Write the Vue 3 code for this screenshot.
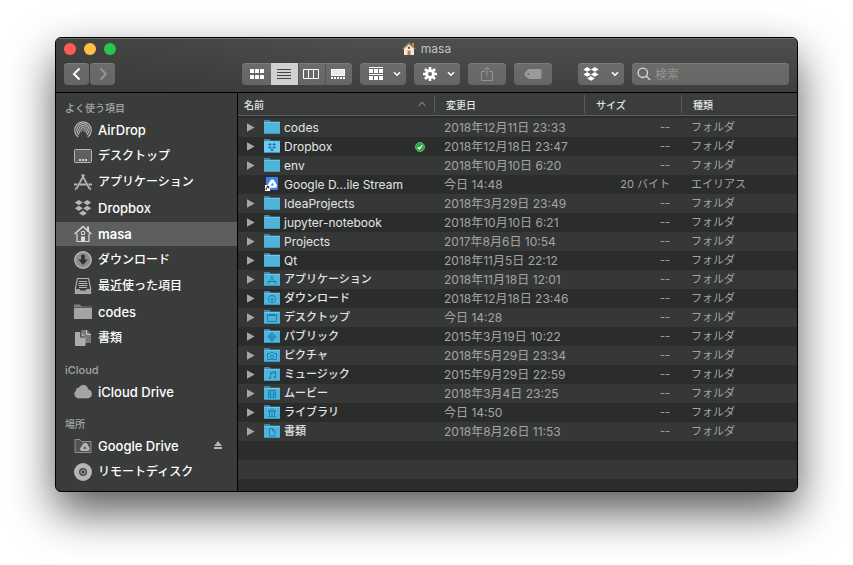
<script setup>
import { ref } from 'vue'

const selected = ref('masa')
const view = ref('list')
const query = ref('')

const groups = [
  {
    title: 'よく使う項目',
    items: [
      { name: 'AirDrop', icon: 'airdrop' },
      { name: 'デスクトップ', icon: 'desktop', ja: true },
      { name: 'アプリケーション', icon: 'apps', ja: true },
      { name: 'Dropbox', icon: 'dropbox' },
      { name: 'masa', icon: 'home' },
      { name: 'ダウンロード', icon: 'download', ja: true },
      { name: '最近使った項目', icon: 'recent', ja: true },
      { name: 'codes', icon: 'folder' },
      { name: '書類', icon: 'docs', ja: true },
    ],
  },
  { title: 'iCloud', latin: true, items: [{ name: 'iCloud Drive', icon: 'cloud' }] },
  {
    title: '場所',
    items: [
      { name: 'Google Drive', icon: 'gdrive', eject: true },
      { name: 'リモートディスク', icon: 'disc', ja: true },
    ],
  },
]

const views = [
  { id: 'icon', label: 'アイコン' },
  { id: 'list', label: 'リスト' },
  { id: 'column', label: 'カラム' },
  { id: 'gallery', label: 'ギャラリー' },
]

const folder = (name, date, glyph = '', ja = false) => ({ name, date, glyph, ja, size: '--', kind: 'フォルダ' })

const files = [
  folder('codes', '2018年12月11日 23:33'),
  { ...folder('Dropbox', '2018年12月18日 23:47', 'dropbox'), synced: true },
  folder('env', '2018年10月10日 6:20'),
  { name: 'Google D...ile Stream', date: '今日 14:48', size: '20 バイト', kind: 'エイリアス', alias: true },
  folder('IdeaProjects', '2018年3月29日 23:49'),
  folder('jupyter-notebook', '2018年10月10日 6:21'),
  folder('Projects', '2017年8月6日 10:54'),
  folder('Qt', '2018年11月5日 22:12'),
  folder('アプリケーション', '2018年11月18日 12:01', 'apps', true),
  folder('ダウンロード', '2018年12月18日 23:46', 'download', true),
  folder('デスクトップ', '今日 14:28', 'desktop', true),
  folder('パブリック', '2015年3月19日 10:22', 'public', true),
  folder('ピクチャ', '2018年5月29日 23:34', 'picture', true),
  folder('ミュージック', '2015年9月29日 22:59', 'music', true),
  folder('ムービー', '2018年3月4日 23:25', 'movie', true),
  folder('ライブラリ', '今日 14:50', 'library', true),
  folder('書類', '2018年8月26日 11:53', 'docs', true),
]
</script>

<template>
  <main class="page">
    <section class="window">
      <header class="titlebar">
        <div class="title-row">
          <div class="lights">
            <button class="light red" aria-label="閉じる"></button>
            <button class="light yellow" aria-label="しまう"></button>
            <button class="light green" aria-label="フルスクリーン"></button>
          </div>
          <h1 class="title">
            <svg width="14" height="14" viewBox="0 0 14 14">
              <path d="M10 1h2v4h-2z" fill="#b98a5a" />
              <path d="M2 6.500 7 2l5 4.500V13H2z" fill="#eceae6" />
              <path d="M.7 7 7 1.200 13.300 7" fill="none" stroke="#a9794b" stroke-width="1.300" />
              <path d="M5.500 8.500h3V13h-3z" fill="#e8701c" />
              <circle cx="7" cy="5.800" r="1.200" fill="#545a62" />
            </svg>
            <span>masa</span>
          </h1>
        </div>

        <div class="toolbar">
          <div class="nav-buttons">
            <button class="btn nav-btn" aria-label="戻る">
              <svg width="24" height="22" viewBox="0 0 24 22"><path d="M14.500 5.500 9 11l5.500 5.500" class="ln w2" /></svg>
            </button>
            <button class="btn nav-btn" aria-label="進む" disabled>
              <svg width="24" height="22" viewBox="0 0 24 22"><path d="M9.500 5.500 15 11 9.500 16.500" class="ln w2 dim" /></svg>
            </button>
          </div>

          <div class="tools">
            <div class="segments">
              <button
                v-for="v in views"
                :key="v.id"
                class="segment"
                :class="{ active: view === v.id }"
                :aria-label="v.label"
                :aria-pressed="view === v.id"
                @click="view = v.id"
              >
                <svg width="16" height="12" viewBox="0 0 16 12">
                  <g v-if="v.id === 'icon'" fill="#fff">
                    <rect x="1" y="1" width="4" height="4" rx=".6" /><rect x="6" y="1" width="4" height="4" rx=".6" /><rect x="11" y="1" width="4" height="4" rx=".6" />
                    <rect x="1" y="7" width="4" height="4" rx=".6" /><rect x="6" y="7" width="4" height="4" rx=".6" /><rect x="11" y="7" width="4" height="4" rx=".6" />
                  </g>
                  <path v-else-if="v.id === 'list'" d="M1 1.500h14M1 4.500h14M1 7.500h14M1 10.500h14" stroke="#444645" />
                  <path v-else-if="v.id === 'column'" d="M.5 1.500h15v9H.5zM5.500 1.500v9M10.500 1.500v9" fill="none" stroke="#fff" />
                  <g v-else>
                    <rect x="1.500" y="1.500" width="13" height="6" fill="#e9eae9" stroke="#fff" />
                    <path d="M1 10h14" stroke="#fff" stroke-width="2" stroke-dasharray="2 1" />
                  </g>
                </svg>
              </button>
            </div>

            <button class="btn menu-btn" aria-label="グループ分け" aria-haspopup="menu">
              <svg width="16" height="14" viewBox="0 0 16 14" fill="#fff">
                <path d="M1 0h14v1H1zM1 7h14v1H1z" />
                <path d="M1 2h4v4H1zM6 2h4v4H6zM11 2h4v4h-4zM1 9h4v4H1zM6 9h4v4H6zM11 9h4v4h-4z" />
              </svg>
              <svg width="8" height="6" viewBox="0 0 8 6"><path d="M1 1.200 4 4.200l3-3" class="ln" /></svg>
            </button>
            <button class="btn menu-btn" aria-label="アクション" aria-haspopup="menu">
              <svg width="16" height="14" viewBox="-8 -7 16 14">
                <g stroke="#fff" stroke-width="2.600">
                  <path d="M0-7V7M-7 0H7M-5-5 5 5M5-5-5 5" />
                </g>
                <circle r="4.800" fill="#fff" /><circle r="2" fill="#6b6d6b" />
              </svg>
              <svg width="8" height="6" viewBox="0 0 8 6"><path d="M1 1.200 4 4.200l3-3" class="ln" /></svg>
            </button>
            <button class="btn wide-btn" aria-label="共有" disabled>
              <svg width="14" height="16" viewBox="0 0 14 16"><path d="M5 5.500H1.500v9h11v-9H9M7 10.500V1.500M4.200 4 7 1.200 9.800 4" class="ln thin dim" /></svg>
            </button>
            <button class="btn wide-btn" aria-label="タグ" disabled>
              <svg width="18" height="12" viewBox="0 0 18 12">
                <path d="M5.500 1h10a2 2 0 0 1 2 2v6a2 2 0 0 1-2 2h-10Q4.500 11 3.500 10L.8 7.200Q0 6 .8 4.800L3.500 2Q4.500 1 5.500 1z" fill="#9a9c9a" />
                <circle cx="4.400" cy="6" r="1.100" fill="#656765" />
              </svg>
            </button>
          </div>

          <div class="right-tools">
            <button class="btn menu-btn logo-btn" aria-label="Dropbox" aria-haspopup="menu">
              <svg width="16" height="14" viewBox="0 0 16 14" fill="#fff">
                <path d="M4.200 0 8 2.400 4.200 4.800.4 2.400zM11.800 0l3.800 2.400-3.800 2.400L8 2.400zM4.200 5l3.800 2.400-3.800 2.400L.4 7.400zM11.800 5l3.800 2.400-3.800 2.400L8 7.400zM8 9l3.800 2.400L8 13.800l-3.800-2.400z" />
              </svg>
              <svg width="8" height="6" viewBox="0 0 8 6"><path d="M1 1.200 4 4.200l3-3" class="ln" /></svg>
            </button>
            <label class="search">
              <svg width="14" height="14" viewBox="0 0 14 14"><circle cx="5.800" cy="5.800" r="4.700" class="ln mid" /><path d="m9.300 9.300 3.800 3.800" class="ln mid" /></svg>
              <input v-model="query" type="search" placeholder="検索" aria-label="検索" />
            </label>
          </div>
        </div>
      </header>

      <div class="body">
        <nav class="sidebar" aria-label="サイドバー">
          <section v-for="g in groups" :key="g.title" class="group">
            <h2 class="group-title" :class="{ latin: g.latin }">{{ g.title }}</h2>
            <div
              v-for="item in g.items"
              :key="item.name"
              class="side-item"
              :class="{ selected: selected === item.name }"
            >
              <a href="#" class="side-link" :class="{ ja: item.ja }" @click.prevent="selected = item.name">
                <svg class="side-icon" width="18" height="18" viewBox="0 0 18 18">
                  <g v-if="item.icon === 'airdrop'" fill="none" stroke="#b4b6b5" stroke-width="1.200">
                    <path d="M4.300 16A8.300 8.300 0 1 1 13.700 16" />
                    <path d="M5.200 13.800A6.200 6.200 0 1 1 12.800 13.800" />
                    <path d="M6.200 12A4.200 4.200 0 1 1 11.800 12" />
                    <path d="M7.600 10.500A2.200 2.200 0 1 1 10.400 10.500" />
                    <path d="M9 8.500v1" stroke-width="1.600" />
                  </g>
                  <g v-else-if="item.icon === 'desktop'">
                    <rect x=".5" y="2.500" width="17" height="13" rx="1" fill="#5e605f" stroke="#b4b6b5" />
                    <path d="M5 13h8" stroke="#d0d2d1" stroke-width="2" stroke-dasharray="2 1" />
                  </g>
                  <g v-else-if="item.icon === 'apps'" fill="none" stroke="#b4b6b5" stroke-width="1.600">
                    <path d="M7.800 1.500 15.600 16M10.200 1.500 2.400 16" />
                    <path d="M0 11.500h3.500M5.500 11.500h7M14.500 11.500H18" stroke-width="1.800" />
                    <path d="M2.300 14.500 1.200 17M15.700 14.500l1.100 2.500" stroke-width="1.200" />
                  </g>
                  <path v-else-if="item.icon === 'dropbox'" fill="#b4b6b5" d="M4.800 1 8.800 3.600 4.800 6.200.8 3.600zM13.200 1l4 2.600-4 2.600-4-2.600zM4.800 6.700l4 2.600-4 2.600-4-2.600zM13.200 6.700l4 2.600-4 2.600-4-2.600zM9 11.600l4 2.600-4 2.600-4-2.600z" />
                  <g v-else-if="item.icon === 'home'">
                    <path d="M13 1.500h2v5h-2z" fill="#d8dad9" />
                    <path d="M3 8.500V16.500h12V8.500" fill="none" stroke="#d8dad9" stroke-width="1.200" />
                    <path d="M.7 9 9 1.500 17.300 9" fill="none" stroke="#d8dad9" stroke-width="1.600" />
                    <path d="M7.500 6.500h3v3h-3z" fill="none" stroke="#d8dad9" />
                    <path d="M7 11.500h4v5H7z" fill="#d8dad9" />
                  </g>
                  <g v-else-if="item.icon === 'download'">
                    <circle cx="9" cy="9" r="8.200" fill="#8b8d8c" stroke="#b4b6b5" stroke-width="1.400" />
                    <path d="M7.200 3.800h3.600v4.700h3L9 14 4.200 8.500h3z" fill="#303231" />
                  </g>
                  <g v-else-if="item.icon === 'recent'">
                    <path d="M3.500 1.500h11l2 9.500v5.500h-15V11z" fill="none" stroke="#b4b6b5" stroke-width="1.200" />
                    <path d="M1.500 12h4l1 1.500h5l1-1.500h4v4.500h-15z" fill="#a0a2a1" />
                    <path d="M5 4.500h8M4.500 6.500h9M4.500 8.500h9M5 10.500h8" stroke="#b4b6b5" />
                  </g>
                  <g v-else-if="item.icon === 'folder'">
                    <path d="M0 2.500Q0 1.500 1 1.500h5l1.500 2H18v2H0z" fill="#7f8180" />
                    <path d="M0 5h18v11H0z" fill="#a3a5a4" />
                    <path d="M0 4.500h18" stroke="#5d5f5e" />
                  </g>
                  <g v-else-if="item.icon === 'docs'">
                    <path d="M7 1h6l4 4v9H7z" fill="#777978" /><path d="M12.500 1v4.500H17" fill="none" stroke="#c6c8c7" />
                    <path d="M1 3h6l4.500 4.500V17H1z" fill="#abadac" /><path d="M6.800 3v5h4.700" fill="none" stroke="#3a3c3b" stroke-width="1.200" />
                  </g>
                  <path v-else-if="item.icon === 'cloud'" fill="#a3a5a4" stroke="#b4b6b5" stroke-width=".6" d="M4.300 15A3.900 3.900 0 0 1 2.200 8 2.800 2.800 0 0 1 5 5 4.600 4.600 0 0 1 13.800 6.500 4.300 4.300 0 0 1 14 15z" />
                  <g v-else-if="item.icon === 'gdrive'">
                    <path d="M1 2.500h5l1.500 2H17v11H1z" fill="#505251" stroke="#8d8f8e" />
                    <path d="M9.800 6h3l3 5.500-1.400 2.500H7l-1.200-2.200zM10.800 9l-1.600 2.800h3.400z" fill="#b4b6b5" fill-rule="evenodd" />
                  </g>
                  <g v-else>
                    <circle cx="9" cy="9" r="9" fill="#b4b6b5" />
                    <circle cx="9" cy="9" r="3.300" fill="#8b8d8c" stroke="#4a4c4b" stroke-width="1.400" />
                    <circle cx="9" cy="9" r="1.200" fill="#3a3c3b" />
                  </g>
                </svg>
                <span>{{ item.name }}</span>
              </a>
              <button v-if="item.eject" class="eject" aria-label="取り出す">
                <svg width="10" height="10" viewBox="0 0 10 10"><path d="M5 0 9 5H1zM1 6h8v2H1z" fill="#b4b6b5" /></svg>
              </button>
            </div>
          </section>
        </nav>

        <div class="pane">
          <table class="files">
            <colgroup>
              <col />
              <col class="c-date" />
              <col class="c-size" />
              <col class="c-kind" />
            </colgroup>
            <thead>
              <tr>
                <th scope="col" aria-sort="ascending">
                  <button class="head name-head">
                    <span>名前</span>
                    <svg width="8" height="6" viewBox="0 0 8 6"><path d="M.8 4.800 4 1.200l3.200 3.600" fill="none" stroke="#a0a2a1" /></svg>
                  </button>
                </th>
                <th scope="col"><button class="head">変更日</button></th>
                <th scope="col"><button class="head">サイズ</button></th>
                <th scope="col"><button class="head">種類</button></th>
              </tr>
            </thead>
            <tbody>
              <tr v-for="f in files" :key="f.name">
                <td>
                  <div class="name-cell">
                    <button v-if="!f.alias" class="disclosure" :aria-label="`${f.name}を開く`">
                      <svg width="8" height="9" viewBox="0 0 8 9"><path d="M0 .3v8.400L7.600 4.500z" fill="#a5a7a6" /></svg>
                    </button>
                    <span v-else class="disclosure"></span>
                    <svg v-if="f.alias" class="file-icon" width="16" height="15" viewBox="0 1 16 15">
                      <rect x="2" y="1" width="12" height="13" rx="1" fill="#3d82ee" />
                      <path d="M7 3.500h2.600l3.600 6-1.300 2.300H4.700L3.400 9.600zM8.300 6.800 6.700 9.600h3.200z" fill="#fff" fill-rule="evenodd" />
                      <path d="M1 9h5v6H1z" fill="#fff" /><path d="M2 14q-.2-2.500 2-3M2.700 10.300h2v2" fill="none" stroke="#111" />
                    </svg>
                    <svg v-else class="file-icon" width="16" height="15" viewBox="0 1 16 15">
                      <path d="M0 1.500Q0 1 .6 1h4.800l1.400 1.500H16V6H0z" fill="#3b8db0" />
                      <path d="M0 3h16V14.400q0 .6-.6.600H.6Q0 15 0 14.400z" :fill="f.synced ? '#6ccbf3' : '#50b3da'" />
                      <path d="M0 3.500h16" stroke="#74c3e2" />
                      <path d="M0 14.500h16" stroke="#3d98bf" />
                      <g fill="none" stroke="#1a86b5">
                        <path v-if="f.glyph === 'dropbox'" fill="#2279a6" stroke="none" d="m5.900 5 2 1.400-2 1.400-2-1.400zM10.100 5l2 1.400-2 1.400-2-1.400zM5.900 8l2 1.400-2 1.400-2-1.400zM10.100 8l2 1.400-2 1.400-2-1.400zM8 10.600l2 1.300-2 1.300-2-1.300z" />
                        <path v-else-if="f.glyph === 'apps'" d="M7.500 5 11.500 13M8.500 5l-4 8M3 10.500h10" />
                        <path v-else-if="f.glyph === 'download'" d="M8 5.300a3.700 3.700 0 1 0 .01 0M8 6.500v4M6.300 9 8 11l1.700-2" />
                        <path v-else-if="f.glyph === 'desktop'" d="M3.500 5.500h9v7h-9zM3.500 6.500h9" />
                        <path v-else-if="f.glyph === 'public'" d="m8 5.200 3.800 3.800L8 12.800 4.200 9zM8 7.600 9.400 9 8 10.400 6.600 9z" stroke-width="1.200" />
                        <path v-else-if="f.glyph === 'picture'" d="M3.500 6.500h2.500l.8-1h2.400l.8 1h2.500v6h-9zM8 7.800a1.700 1.700 0 1 0 .01 0" />
                        <path v-else-if="f.glyph === 'music'" d="M6.500 12V6.500l5-1V11M6.500 7.500l5-1M5 11.500h1.200v1H5zM10 10.500h1.200v1H10z" />
                        <path v-else-if="f.glyph === 'movie'" d="M4.500 5.500h7v7h-7zM6.500 5.500v7M9.500 5.500v7M4.500 7.800h2M9.500 7.800h2M4.500 10.200h2M9.500 10.200h2M6.500 9h3" />
                        <path v-else-if="f.glyph === 'library'" d="M4 7.500 8 5l4 2.500zM5.500 8v4M8 8v4M10.500 8v4M4 12.500h8" />
                        <path v-else-if="f.glyph === 'docs'" d="M5.500 5.500h3l2.500 2.500v5H5.500zM8.500 5.500V8H11" />
                      </g>
                    </svg>
                    <span class="file-name" :class="{ ja: f.ja }">{{ f.name }}</span>
                    <svg v-if="f.synced" class="sync" width="10" height="10" viewBox="0 0 10 10" role="img" aria-label="同期済み">
                      <circle cx="5" cy="5" r="4.500" fill="#27a641" stroke="#6fc97f" stroke-width=".8" /><path d="m2.700 5.200 1.700 1.600 2.900-3.400" fill="none" stroke="#fff" stroke-width="1.300" />
                    </svg>
                  </div>
                </td>
                <td class="date">{{ f.date }}</td>
                <td class="size">{{ f.size }}</td>
                <td>{{ f.kind }}</td>
              </tr>
            </tbody>
          </table>
        </div>
      </div>
    </section>
  </main>
</template>

<style>
body {
  background: #fff;
}
</style>

<style scoped>
* {
  box-sizing: border-box;
}
button {
  border: 0;
  padding: 0;
  margin: 0;
  background: none;
  font: inherit;
  color: inherit;
}
svg {
  display: block;
  flex: none;
}
.page {
  display: flex;
  min-height: 100vh;
  padding: 37px 55px 73px;
  font-family: Inter, 'Noto Sans CJK JP', sans-serif;
  font-size: 11px;
  color: #e3e5e4;
}
.window {
  flex: 1;
  min-width: 0;
  display: flex;
  flex-direction: column;
  border: 1px solid #000;
  border-radius: 6px;
  overflow: hidden;
  background: #3a3c3b;
  box-shadow: 0 20px 45px rgba(0, 0, 0, 0.65);
}
.titlebar {
  padding: 0 8px 7px;
  background: linear-gradient(90deg, rgba(50, 54, 48, 0.5), rgba(50, 54, 48, 0.3) 20%, transparent 40%), linear-gradient(#4e504f, #3d3f3d);
  border-bottom: 1px solid #000;
  box-shadow: inset 0 1px 0 #6d6f6e;
}
.title-row {
  display: grid;
  grid-template-columns: 1fr auto 1fr;
  align-items: center;
  height: 22px;
  margin-bottom: 3px;
}
.lights {
  display: flex;
  gap: 8px;
}
.light {
  width: 12px;
  height: 12px;
  border-radius: 50%;
}
.red {
  background: #ff5b54;
}
.yellow {
  background: #ffbd4a;
}
.green {
  background: #28c64c;
}
.title {
  display: flex;
  align-items: center;
  gap: 5px;
  margin: 0;
  font-size: 12px;
  line-height: 22px;
  font-weight: 400;
  color: #c0c2c1;
}
.toolbar {
  display: flex;
  align-items: center;
}
.nav-buttons {
  display: flex;
  gap: 1px;
}
.tools {
  display: flex;
  gap: 8px;
  margin-left: auto;
}
.right-tools {
  display: flex;
  gap: 8px;
  margin-left: 26px;
}
.btn,
.segments,
.search {
  height: 22px;
  border-radius: 4px;
  background: linear-gradient(#6b6d6b, #646664);
  box-shadow: inset 0 1px 0 #7a7c7a;
}
.btn {
  display: flex;
  align-items: center;
  justify-content: center;
}
.nav-btn {
  width: 25px;
}
.menu-btn {
  width: 46px;
  gap: 9px;
  padding-left: 3px;
}
.logo-btn {
  gap: 12px;
  padding-left: 0;
}
.wide-btn {
  width: 38px;
}
.segments {
  display: flex;
  overflow: hidden;
}
.segment {
  display: flex;
  align-items: center;
  justify-content: center;
  width: 27px;
  padding-right: 1px;
}
.segment:first-child {
  width: 29px;
  padding-right: 0;
}
.segment + .segment {
  box-shadow: inset 1px 0 0 #545654;
}
.segment.active {
  background: #cfd1cf;
  box-shadow: none;
}
.ln {
  fill: none;
  stroke: #fff;
  stroke-width: 1.6;
}
.w2 {
  stroke-width: 2;
}
.mid {
  stroke: #d6d8d6;
  stroke-width: 1.4;
}
.thin {
  stroke-width: 1;
}
.dim {
  stroke: #949694;
}
.search {
  display: flex;
  align-items: center;
  gap: 4px;
  width: 157px;
  padding: 0 5px;
}
.search input {
  flex: 1;
  min-width: 0;
  padding: 0;
  border: 0;
  outline: 0;
  background: none;
  font: inherit;
  font-size: 12px;
  color: #fff;
}
.search input::placeholder {
  color: #929492;
  opacity: 1;
}
.body {
  flex: 1;
  display: flex;
}
.sidebar {
  flex: none;
  width: 182px;
  padding-top: 5px;
  border-right: 1px solid #000;
}
.group {
  padding-bottom: 8px;
}
.group:last-child {
  padding-bottom: 0;
}
.group-title {
  margin: 0;
  padding-left: 9px;
  font-size: 10px;
  line-height: 20px;
  font-weight: 500;
  color: #a3a5a4;
}
.group-title.latin {
  font-size: 11px;
}
.side-item {
  display: flex;
  align-items: center;
  height: 24px;
  margin-bottom: 2px;
  padding: 0 14px 0 18px;
}
.side-item.selected {
  background: #5d5f5e;
}
.side-link {
  flex: 1;
  display: flex;
  align-items: center;
  gap: 6px;
  font-size: 13px;
  font-weight: 500;
  line-height: 24px;
  color: #fff;
  text-decoration: none;
}
.side-link.ja {
  font-size: 12px;
}
.selected .side-link {
  font-weight: 600;
}
.pane {
  flex: 1;
  min-width: 0;
  background: repeating-linear-gradient(#363837 0 19px, #2b2d2c 19px 38px) 0 25px / 100% 38px;
}
.files {
  width: 100%;
  table-layout: fixed;
  border-collapse: separate;
  border-spacing: 0;
}
.c-date {
  width: 150px;
}
.c-size {
  width: 97px;
}
.c-kind {
  width: 115px;
}
th {
  padding: 0 0 2px;
  font-size: 10px;
  font-weight: 500;
  text-align: left;
}
.head {
  display: flex;
  align-items: center;
  width: 100%;
  height: 23px;
  padding: 0 0 0 11px;
  border-bottom: 1px solid #5b5d5c;
  background: linear-gradient(#5b5d5c, #5b5d5c) right center / 1px 18px no-repeat #3b3d3c;
}
th:last-child .head {
  background-image: none;
}
.name-head {
  justify-content: space-between;
  padding: 0 9px 0 6px;
}
td {
  height: 19px;
  padding: 0 0 0 9px;
  line-height: 19px;
  color: #a3a5a4;
  white-space: nowrap;
}
td.date {
  font-size: 12px;
}
td.size {
  padding: 0 12px 0 0;
  text-align: right;
}
.name-cell {
  display: flex;
  align-items: center;
  height: 19px;
  padding-right: 10px;
  color: #e3e5e4;
}
.disclosure {
  flex: none;
  width: 8px;
  margin-right: 9px;
}
.file-icon {
  margin-right: 4px;
}
.file-name {
  flex: 1;
  font-size: 12px;
}
.file-name.ja {
  font-size: 11px;
  font-weight: 500;
}
</style>
